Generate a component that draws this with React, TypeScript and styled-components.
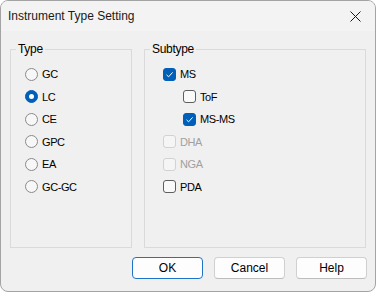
import React, { useState } from 'react';
import styled, { createGlobalStyle } from 'styled-components';

const GlobalStyle = createGlobalStyle`
  html, body {
    margin: 0;
    padding: 0;
    background: #ffffff;
  }
  * {
    box-sizing: border-box;
  }
`;

const Window = styled.div`
  width: 376px;
  height: 292px;
  display: flex;
  flex-direction: column;
  background: #f0f0f0;
  border: 1px solid #a3a3a3;
  border-radius: 8px;
  overflow: hidden;
  font-family: 'Liberation Sans', Arial, sans-serif;
  font-size: 12px;
  color: #000000;
`;

const TitleBar = styled.div`
  height: 30px;
  display: flex;
  align-items: center;
  justify-content: space-between;
  padding: 0 12px 0 7px;
  background: #f3f3f3;
`;

const Title = styled.span`
  font-size: 12px;
  color: #1a1a1a;
`;

const CloseButton = styled.button`
  width: 16px;
  height: 16px;
  padding: 0;
  border: none;
  background: transparent;
  display: flex;
  align-items: center;
  justify-content: center;
  cursor: pointer;
`;

const Body = styled.div`
  flex: 1;
  display: flex;
  flex-direction: column;
  padding: 11px 8px 11px 9px;
`;

const Groups = styled.div`
  display: flex;
  gap: 12px;
  height: 206px;
`;

const GroupBox = styled.fieldset<{ $width: number }>`
  width: ${(p) => p.$width}px;
  margin: 0;
  padding: 7px 0 0 0;
  border: 1px solid #dadada;
  border-radius: 0;
  min-width: 0;
`;

const Legend = styled.legend`
  margin-left: 5px;
  padding: 0 2px;
  font-size: 12px;
  line-height: 14px;
  letter-spacing: -0.3px;
`;

const Row = styled.label<{ $indent?: number; $disabled?: boolean }>`
  height: 22.5px;
  display: flex;
  align-items: center;
  gap: 4px;
  padding-left: ${(p) => p.$indent ?? 14}px;
  font-size: 11px;
  letter-spacing: -0.4px;
  color: ${(p) => (p.$disabled ? '#a0a0a0' : '#000000')};
  cursor: ${(p) => (p.$disabled ? 'default' : 'pointer')};
  user-select: none;
`;

const RadioDot = styled.span<{ $on: boolean }>`
  width: 13px;
  height: 13px;
  border-radius: 50%;
  flex-shrink: 0;
  display: flex;
  align-items: center;
  justify-content: center;
  background: ${(p) => (p.$on ? '#005fb8' : '#f7f7f7')};
  border: 1px solid ${(p) => (p.$on ? '#005fb8' : '#8a8a8a')};

  &::after {
    content: '';
    width: 5px;
    height: 5px;
    border-radius: 50%;
    background: #ffffff;
    display: ${(p) => (p.$on ? 'block' : 'none')};
  }
`;

const CheckBox = styled.span<{ $on: boolean; $disabled?: boolean }>`
  width: 13px;
  height: 13px;
  border-radius: 3px;
  flex-shrink: 0;
  display: flex;
  align-items: center;
  justify-content: center;
  background: ${(p) => (p.$on ? '#005fb8' : p.$disabled ? '#f5f5f5' : '#f9f9f9')};
  border: 1px solid
    ${(p) => (p.$on ? '#005fb8' : p.$disabled ? '#d2d2d2' : '#5e5e5e')};
`;

const ButtonRow = styled.div`
  display: flex;
  justify-content: flex-end;
  gap: 11px;
  margin-top: auto;
  padding-bottom: 1px;
`;

const Button = styled.button<{ $primary?: boolean }>`
  width: 71px;
  height: 22px;
  padding: 0;
  font-family: 'Liberation Sans', Arial, sans-serif;
  font-size: 12px;
  color: #000000;
  background: #fdfdfd;
  border: 1px solid ${(p) => (p.$primary ? '#1f73c7' : '#d0d0d0')};
  border-bottom-color: ${(p) => (p.$primary ? '#1f73c7' : '#bdbdbd')};
  border-radius: 4px;
  cursor: pointer;
`;

const CheckMark = () => (
  <svg width="9" height="9" viewBox="0 0 9 9">
    <path d="M1.5 4.8 L3.6 6.8 L7.6 2.4" fill="none" stroke="#ffffff" strokeWidth="1" />
  </svg>
);

const CloseIcon = () => (
  <svg width="11" height="11" viewBox="0 0 11 11">
    <path d="M0.5 0.5 L10.5 10.5 M10.5 0.5 L0.5 10.5" stroke="#1a1a1a" strokeWidth="1" />
  </svg>
);

const types = ['GC', 'LC', 'CE', 'GPC', 'EA', 'GC-GC'];

interface SubItem {
  key: string;
  label: string;
  indent: number;
  disabled?: boolean;
}

const subtypes: SubItem[] = [
  { key: 'ms', label: 'MS', indent: 18 },
  { key: 'tof', label: 'ToF', indent: 38 },
  { key: 'msms', label: 'MS-MS', indent: 38 },
  { key: 'dha', label: 'DHA', indent: 18, disabled: true },
  { key: 'nga', label: 'NGA', indent: 18, disabled: true },
  { key: 'pda', label: 'PDA', indent: 18 },
];

const App: React.FC = () => {
  const [type, setType] = useState('LC');
  const [checked, setChecked] = useState<Record<string, boolean>>({
    ms: true,
    tof: false,
    msms: true,
    dha: false,
    nga: false,
    pda: false,
  });

  const toggle = (item: SubItem) => {
    if (item.disabled) return;
    setChecked({ ...checked, [item.key]: !checked[item.key] });
  };

  return (
    <>
      <GlobalStyle />
      <Window>
        <TitleBar>
          <Title>Instrument Type Setting</Title>
          <CloseButton aria-label="Close">
            <CloseIcon />
          </CloseButton>
        </TitleBar>
        <Body>
          <Groups>
            <GroupBox $width={122}>
              <Legend>Type</Legend>
              {types.map((t) => (
                <Row key={t} onClick={() => setType(t)}>
                  <RadioDot $on={type === t} />
                  {t}
                </Row>
              ))}
            </GroupBox>
            <GroupBox $width={222}>
              <Legend>Subtype</Legend>
              {subtypes.map((s) => (
                <Row
                  key={s.key}
                  $indent={s.indent}
                  $disabled={s.disabled}
                  onClick={() => toggle(s)}
                >
                  <CheckBox $on={checked[s.key]} $disabled={s.disabled}>
                    {checked[s.key] && <CheckMark />}
                  </CheckBox>
                  {s.label}
                </Row>
              ))}
            </GroupBox>
          </Groups>
          <ButtonRow>
            <Button $primary>OK</Button>
            <Button>Cancel</Button>
            <Button>Help</Button>
          </ButtonRow>
        </Body>
      </Window>
    </>
  );
};

export default App;
